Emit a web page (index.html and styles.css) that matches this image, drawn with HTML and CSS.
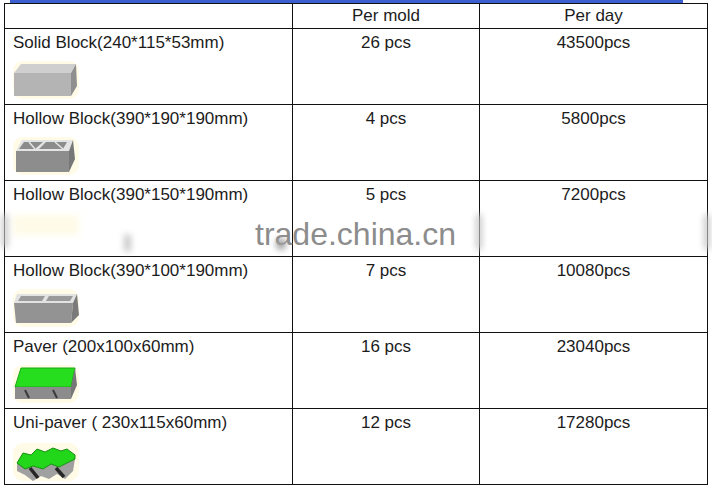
FILE: index.html
```html
<!DOCTYPE html>
<html>
<head>
<meta charset="utf-8">
<link rel="stylesheet" href="styles.css">
</head>
<body>
<div class="page">
  <div class="topbar"></div>
  <table class="spec">
    <colgroup>
      <col class="c1"><col class="c2"><col class="c3">
    </colgroup>
    <thead>
      <tr class="head"><th></th><th>Per mold</th><th>Per day</th></tr>
    </thead>
    <tbody>
      <tr>
        <td class="name">Solid Block(240*115*53mm)
          <svg class="pic" viewBox="0 0 66 38" width="66" height="38">
            <rect x="0" y="0" width="66" height="38" rx="10" fill="#fffbe6"/>
            <polygon points="8,3 63,3 58,12 1,12" fill="#cfcfcf"/>
            <rect x="1" y="12" width="57" height="23" fill="#b4b4b4"/>
            <polygon points="58,12 63,3 64,25 58,35" fill="#8f8f8f"/>
          </svg>
        </td>
        <td>26 pcs</td><td>43500pcs</td>
      </tr>
      <tr>
        <td class="name">Hollow Block(390*190*190mm)
          <svg class="pic" viewBox="0 0 66 38" width="66" height="38">
            <rect x="0" y="0" width="66" height="38" rx="10" fill="#fffbe6"/>
            <polygon points="9,3 60,3 56,14 3,14" fill="#e4e4e4"/>
            <polygon points="11,5 30,5 22,12 6,12" fill="#8c8c8c"/>
            <polygon points="33,5 54,5 50,12 26,12" fill="#8c8c8c"/>
            <line x1="22" y1="12" x2="16" y2="5" stroke="#e4e4e4" stroke-width="1.5"/>
            <line x1="50" y1="12" x2="42" y2="5" stroke="#e4e4e4" stroke-width="1.5"/>
            <rect x="3" y="14" width="53" height="21" fill="#8d8d8d"/>
            <polygon points="56,14 60,3 62,22 56,35" fill="#777"/>
          </svg>
        </td>
        <td>4 pcs</td><td>5800pcs</td>
      </tr>
      <tr>
        <td class="name">Hollow Block(390*150*190mm)
          <div class="ghost"></div>
        </td>
        <td>5 pcs</td><td>7200pcs</td>
      </tr>
      <tr>
        <td class="name">Hollow Block(390*100*190mm)
          <svg class="pic" viewBox="0 0 66 38" width="66" height="38">
            <rect x="0" y="0" width="66" height="38" rx="10" fill="#fffbe6"/>
            <polygon points="4,5 64,5 60,14 1,14" fill="#e2e2e2"/>
            <polygon points="8,7 32,7 29,12 5,12" fill="#9a9a9a"/>
            <polygon points="36,7 60,7 57,12 33,12" fill="#9a9a9a"/>
            <polygon points="1,14 60,14 58,34 3,34" fill="#939393"/>
            <polygon points="60,14 64,5 66,26 58,34" fill="#7a7a7a"/>
          </svg>
        </td>
        <td>7 pcs</td><td>10080pcs</td>
      </tr>
      <tr>
        <td class="name">Paver (200x100x60mm)
          <svg class="pic" viewBox="0 0 66 38" width="66" height="38">
            <rect x="0" y="0" width="66" height="38" rx="10" fill="#fffbe6"/>
            <polygon points="8,3 62,3 58,22 2,22" fill="#26dd1e" stroke="#1aa814" stroke-width="1"/>
            <rect x="2" y="22" width="56" height="12" fill="#8c8c8c"/>
            <polygon points="58,22 62,3 64,20 58,34" fill="#777"/>
            <line x1="12" y1="25" x2="16" y2="33" stroke="#3a3a3a" stroke-width="2"/>
            <line x1="40" y1="25" x2="44" y2="33" stroke="#3a3a3a" stroke-width="2"/>
          </svg>
        </td>
        <td>16 pcs</td><td>23040pcs</td>
      </tr>
      <tr>
        <td class="name">Uni-paver ( 230x115x60mm)
          <svg class="pic pic-uni" viewBox="0 0 66 38" width="66" height="38">
            <rect x="0" y="0" width="66" height="38" rx="10" fill="#fffbe6"/>
            <path d="M4,20 L4,28 L12,32 L20,38 L28,33 L36,36 L44,31 L52,36 L60,28 L62,16 L54,20 L46,24 L38,21 L30,26 L20,23 Z" fill="#a0a0a0"/>
            <path d="M17,25 L25,35 M43,25 L51,34" stroke="#262626" stroke-width="3.5"/>
            <path d="M4,20 L10,10 L18,12 L24,6 L32,9 L40,5 L48,8 L54,6 L62,12 L62,16 L54,20 L46,24 L38,21 L30,26 L20,23 L12,26 Z" fill="#22d61a" stroke="#168f12" stroke-width="1" stroke-linejoin="round"/>
          </svg>
        </td>
        <td>12 pcs</td><td>17280pcs</td>
      </tr>
    </tbody>
  </table>
  <div class="watermark">trade.china.cn</div>
  <div class="smear s1"></div>
  <div class="smear s2"></div>
  <div class="smear s3"></div>
  <div class="smear s4"></div>
  <div class="smear s5"></div>
</div>
</body>
</html>
```
FILE: styles.css
```css
html, body {
  margin: 0;
  padding: 0;
  background: #ffffff;
}
.page {
  position: relative;
  width: 712px;
  height: 489px;
  overflow: hidden;
  font-family: "Liberation Sans", Arial, sans-serif;
  color: #1c1c1c;
}
.topbar {
  margin-left: 10px;
  width: 673px;
  height: 3px;
  background: #3b5fd0;
}
.spec {
  margin-left: 4px;
  border-collapse: collapse;
  table-layout: fixed;
  width: 703px;
  font-size: 17px;
}
.c1 { width: 288px; }
.c2 { width: 187px; }
.c3 { width: 228px; }
.spec th, .spec td {
  border: 1px solid #111;
  padding: 0;
  vertical-align: top;
  text-align: center;
  font-weight: normal;
}
.head th {
  height: 24px;
  line-height: 24px;
}
.spec td {
  height: 76px;
  padding-top: 4px;
  line-height: 20px;
  box-sizing: border-box;
}
.spec td.name {
  text-align: left;
  padding-left: 8px;
}
.pic {
  display: block;
  margin-top: 8px;
  margin-left: 0;
}
.pic-uni { margin-top: 10px; }
.ghost {
  width: 66px;
  height: 20px;
  margin-top: 10px;
  background: #fffbe8;
  filter: blur(3px);
}
.watermark {
  position: absolute;
  left: 255px;
  top: 216px;
  font-size: 32px;
  line-height: 36px;
  color: #8c8c8c;
  font-family: "Liberation Sans", Arial, sans-serif;
}
.smear {
  position: absolute;
  background: #c8c8c8;
  filter: blur(3px);
  border-radius: 6px;
}
.s1 { left: 2px; top: 214px; width: 6px; height: 34px; }
.s2 { left: 124px; top: 234px; width: 7px; height: 18px; }
.s3 { left: 276px; top: 238px; width: 10px; height: 12px; background: #a0a0a0; }
.s4 { left: 476px; top: 214px; width: 6px; height: 36px; }
.s5 { left: 704px; top: 214px; width: 6px; height: 36px; }
```
